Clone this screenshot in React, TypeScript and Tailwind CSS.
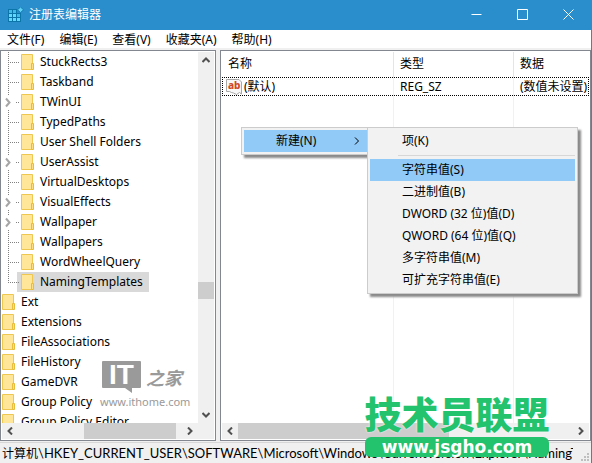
import type { ReactNode } from 'react';

type Branch = 'leaf' | 'expandable' | 'last';

interface TreeNode {
  name: string;
  branch: Branch;
}

const explorerKeys: TreeNode[] = [
  { name: 'StuckRects3', branch: 'leaf' },
  { name: 'Taskband', branch: 'leaf' },
  { name: 'TWinUI', branch: 'expandable' },
  { name: 'TypedPaths', branch: 'leaf' },
  { name: 'User Shell Folders', branch: 'leaf' },
  { name: 'UserAssist', branch: 'expandable' },
  { name: 'VirtualDesktops', branch: 'leaf' },
  { name: 'VisualEffects', branch: 'expandable' },
  { name: 'Wallpaper', branch: 'expandable' },
  { name: 'Wallpapers', branch: 'leaf' },
  { name: 'WordWheelQuery', branch: 'leaf' },
  { name: 'NamingTemplates', branch: 'last' },
];

const siblingKeys = [
  'Ext',
  'Extensions',
  'FileAssociations',
  'FileHistory',
  'GameDVR',
  'Group Policy',
  'Group Policy Editor',
];

const menus = ['文件(F)', '编辑(E)', '查看(V)', '收藏夹(A)', '帮助(H)'];

const newItems = [
  '字符串值(S)',
  '二进制值(B)',
  'DWORD (32 位)值(D)',
  'QWORD (64 位)值(Q)',
  '多字符串值(M)',
  '可扩充字符串值(E)',
];

function RegeditIcon() {
  return (
    <svg className="size-4 shrink-0" viewBox="0 0 16 16" aria-hidden="true">
      <path d="M0 2h9v4h4v9H0z" fill="#0b74a8" />
      <path d="M1 3h3v3H1zM5 3h3v3H5zM9 7h3v3H9z" fill="#3fb9e8" />
      <path d="M1 7h3v3H1zM5 7h3v3H5zM1 11h3v3H1zM5 11h3v3H5zM9 11h3v3H9z" fill="#62d8fb" />
      <path d="M12.5 0l3 2.8-3 2.8-3-2.8z" fill="#5fd0f5" stroke="#0b74a8" strokeWidth="0.8" />
    </svg>
  );
}

function FolderIcon() {
  return (
    <svg className="h-4 w-[13px] shrink-0" viewBox="0 0 13 16" aria-hidden="true">
      <path d="M0.5 0.5h11v15h-11z" fill="#ffe699" stroke="#edc74f" />
      <path d="M10.5 9.5h2v6h-2z" fill="#ffdf80" stroke="#e8bd3c" />
    </svg>
  );
}

function StringIcon() {
  return (
    <svg className="h-4 w-4 shrink-0" viewBox="0 0 16 16" aria-hidden="true">
      <path
        d="M0.5 0.5h12.5l2.5 2.5v12l-2-1.5-3 2-3-1.5-2-0.5-2-1h-3z"
        fill="#f7f7f7"
        stroke="#a9a9a9"
      />
      <text
        x="2"
        y="10"
        fontFamily="Noto Sans, sans-serif"
        fontSize="10"
        fontWeight="800"
        fill="#d24726"
      >
        ab
      </text>
    </svg>
  );
}

function Chevron({ d, className }: { d: string; className: string }) {
  return (
    <svg className={className} viewBox="0 0 8 8" fill="none" stroke="currentColor" aria-hidden="true">
      <path d={d} />
    </svg>
  );
}

const RIGHT = 'M2 0.5L5.5 4L2 7.5';
const LEFT = 'M6 0.5L2.5 4L6 7.5';
const UP = 'M0.5 6L4 2.5L7.5 6';
const DOWN = 'M0.5 2L4 5.5L7.5 2';

function Lines({ branch }: { branch: Branch }) {
  return (
    <svg className="h-5 w-[19px] shrink-0" viewBox="0 0 19 20" fill="none" stroke="#808080" aria-hidden="true">
      {branch === 'leaf' && <path d="M6.5 0V20M8 10.5H18" strokeDasharray="1 1" />}
      {branch === 'last' && (
        <>
          <path d="M15 0h4v20h-4z" fill="#d9d9d9" stroke="none" />
          <path d="M6.5 0V11M8 10.5H18" strokeDasharray="1 1" />
        </>
      )}
      {branch === 'expandable' && (
        <>
          <path d="M6.5 0V4M6.5 18V20M14 10.5H18" strokeDasharray="1 1" />
          <path d="M4 6.5L7.5 10.5L4 14.5" stroke="#a6a6a6" strokeWidth="2" />
        </>
      )}
    </svg>
  );
}

function ScrollButton({ label, d }: { label: string; d: string }) {
  return (
    <button type="button" aria-label={label} className="flex size-4 shrink-0 items-center justify-center text-[#505050]">
      <Chevron d={d} className="size-2 stroke-2" />
    </button>
  );
}

function MenuItem({ children, active = false }: { children: ReactNode; active?: boolean }) {
  return (
    <button
      type="button"
      role="menuitem"
      className={`flex h-[22px] w-full items-center pl-8 text-left ${active ? 'bg-[#91c9f7]' : ''}`}
    >
      {children}
    </button>
  );
}

function Tree() {
  return (
    <section className="flex w-[216px] shrink-0 flex-col border border-[#828790] bg-white p-px">
      <div className="flex min-h-0 flex-1">
        <ul className="min-w-0 flex-1 overflow-hidden whitespace-nowrap">
          {explorerKeys.map((node) => (
            <li key={node.name} className="flex h-5 items-center">
              <Lines branch={node.branch} />
              <span className={`flex h-5 items-center gap-1.5 pr-1.5 ${node.branch === 'last' ? 'bg-[#d9d9d9]' : ''}`}>
                <FolderIcon />
                {node.name}
              </span>
            </li>
          ))}
          {siblingKeys.map((name) => (
            <li key={name} className="flex h-5 items-center gap-1.5">
              <FolderIcon />
              {name}
            </li>
          ))}
        </ul>
        <div className="flex w-4 flex-col bg-[#f0f0f0]">
          <ScrollButton label="向上滚动" d={UP} />
          <div className="flex-1" />
          <div className="h-[17px] bg-[#cdcdcd]" />
          <div className="h-[108px]" />
          <ScrollButton label="向下滚动" d={DOWN} />
        </div>
      </div>
      <div className="flex h-4 bg-[#f0f0f0] pr-4">
        <ScrollButton label="向左滚动" d={LEFT} />
        <div className="flex-1" />
        <div className="w-[92px] bg-[#cdcdcd]" />
        <div className="w-1.5" />
        <ScrollButton label="向右滚动" d={RIGHT} />
      </div>
    </section>
  );
}

function Values() {
  return (
    <section className="flex min-w-0 flex-1 flex-col border border-[#828790] bg-white p-px">
      <div className="flex min-h-0 flex-1 flex-col overflow-hidden">
        <table className="w-full table-fixed border-separate border-spacing-0 text-left whitespace-nowrap">
          <thead>
            <tr className="h-[25px]">
              <th className="w-[172px] border-r border-[#e5e5e5] pb-0.5 pl-1.5 font-normal">名称</th>
              <th className="w-[120px] border-r border-[#e5e5e5] pb-0.5 pl-1.5 font-normal">类型</th>
              <th className="pb-0.5 pl-1.5 font-normal">数据</th>
            </tr>
          </thead>
          <tbody>
            <tr className="h-[19px] outline-1 -outline-offset-1 outline-black outline-dotted">
              <td className="border-r border-[#edf2f9] pl-1">
                <span className="flex items-center gap-0.5">
                  <StringIcon />
                  (默认)
                </span>
              </td>
              <td className="border-r border-[#edf2f9] pl-1.5">REG_SZ</td>
              <td className="pl-1.5">(数值未设置)</td>
            </tr>
          </tbody>
        </table>
        <div className="flex flex-1">
          <div className="w-[172px] border-r border-[#edf2f9]" />
          <div className="w-[120px] border-r border-[#edf2f9]" />
        </div>
      </div>
      <div className="flex h-4 bg-[#f0f0f0]">
        <ScrollButton label="向左滚动" d={LEFT} />
        <div className="w-[211px] bg-[#cdcdcd]" />
        <div className="flex-1" />
        <ScrollButton label="向右滚动" d={RIGHT} />
      </div>
    </section>
  );
}

function ContextMenu() {
  return (
    <div className="absolute top-[127px] left-[241px] flex items-start">
      <div role="menu" className="w-[127px] border border-[#ccc] bg-[#f2f2f2] py-0.5 pl-0.5 shadow-[3px_3px_2px_#8a8a8a]">
        <button type="button" role="menuitem" className="flex h-[22px] w-full items-center justify-between bg-[#91c9f7] pr-1.5 pl-8">
          新建(N)
          <Chevron d={RIGHT} className="size-2" />
        </button>
      </div>
      <div role="menu" className="-ml-px w-[211px] border border-[#ccc] bg-[#f2f2f2] p-0.5 shadow-[3px_3px_2px_#8a8a8a]">
        <MenuItem>项(K)</MenuItem>
        <hr className="my-[3px] ml-7 border-[#d7d7d7]" />
        {newItems.map((item, i) => (
          <MenuItem key={item} active={i === 0}>
            {item}
          </MenuItem>
        ))}
      </div>
    </div>
  );
}

function IthomeMark() {
  return (
    <div className="pointer-events-none absolute top-[361px] left-[100px] text-[#9a9a9a]">
      <div className="flex h-8 items-start gap-1 pl-0.5">
        <svg className="h-8 w-10" viewBox="0 0 40 32" aria-hidden="true">
          <path d="M1 0h37a1 1 0 0 1 1 1v25a1 1 0 0 1-1 1H30v5l-7-5H1a1 1 0 0 1-1-1V1a1 1 0 0 1 1-1z" fill="currentColor" />
          <text x="7" y="23" fontFamily="Liberation Sans, sans-serif" fontSize="28" fontWeight="700" fill="#fff">
            IT
          </text>
        </svg>
        <span className="font-['Noto_Sans_CJK_SC',sans-serif] text-[18px] leading-8 font-bold italic">之家</span>
      </div>
      <p className="text-[11px] leading-[18px]">www.ithome.com</p>
    </div>
  );
}

function JsghoMark() {
  return (
    <div className="pointer-events-none absolute right-[42px] bottom-1.5 w-[184px] text-center">
      <p className="mb-1 flex justify-center font-['Noto_Sans_CJK_SC',sans-serif] text-[37px] leading-10 font-black whitespace-nowrap text-[#23c26d] [text-shadow:0_0_2px_#fff]">
        技术员联盟
      </p>
      <p className="h-5 rounded-md bg-[#23c26d] font-['DejaVu_Sans',sans-serif] text-[17px] leading-5 font-bold text-white">
        www.jsgho.com
      </p>
    </div>
  );
}

export default function App() {
  return (
    <div className="relative flex h-screen flex-col overflow-hidden border-r border-[#2a8dcc] bg-[#f0f0f0] font-['Noto_Sans','Noto_Sans_CJK_SC',sans-serif] text-[12px] leading-4 text-black">
      <header className="flex h-[30px] shrink-0 items-center bg-[#2a8dcc] pl-2 text-white">
        <RegeditIcon />
        <h1 className="flex-1 pl-[5px]">注册表编辑器</h1>
        <button type="button" aria-label="最小化" className="flex h-[29px] w-[46px] items-center justify-center self-start">
          <svg className="size-[11px]" viewBox="0 0 11 11" stroke="currentColor" fill="none">
            <path d="M0.5 5.5h10" />
          </svg>
        </button>
        <button type="button" aria-label="最大化" className="flex h-[29px] w-[46px] items-center justify-center self-start">
          <svg className="size-[11px]" viewBox="0 0 11 11" stroke="currentColor" fill="none">
            <path d="M0.5 0.5h10v10h-10z" />
          </svg>
        </button>
        <button type="button" aria-label="关闭" className="flex h-[29px] w-[46px] items-center justify-center self-start">
          <svg className="size-[11px]" viewBox="0 0 11 11" stroke="currentColor" fill="none">
            <path d="M0.5 0.5l10 10M10.5 0.5l-10 10" />
          </svg>
        </button>
      </header>

      <nav className="flex h-[18px] shrink-0 items-end gap-[15px] bg-white pl-[7px]">
        {menus.map((menu) => (
          <button key={menu} type="button">
            {menu}
          </button>
        ))}
      </nav>

      <main className="mt-0.5 flex min-h-0 flex-1 gap-1">
        <Tree />
        <Values />
      </main>

      <footer className="mt-px flex h-[21px] shrink-0 items-center border-t border-[#d7d7d7] pl-0.5">
        <p className="min-w-0 flex-1 overflow-hidden font-['Lato',sans-serif] text-[13px] leading-5 whitespace-nowrap">
          <span className="font-['Noto_Sans_CJK_SC',sans-serif] text-[12px]">计算机</span>
          \HKEY_CURRENT_USER\SOFTWARE\Microsoft\Windows\CurrentVersion\Explorer\NamingTemplates
        </p>
        <svg className="ml-1.5 size-3 self-end" viewBox="0 0 12 12" fill="#bfbfbf" aria-hidden="true">
          <path d="M8 2h2v2H8zM5 5h2v2H5zM8 5h2v2H8zM2 8h2v2H2zM5 8h2v2H5zM8 8h2v2H8z" />
        </svg>
      </footer>

      <ContextMenu />
      <IthomeMark />
      <JsghoMark />
    </div>
  );
}
